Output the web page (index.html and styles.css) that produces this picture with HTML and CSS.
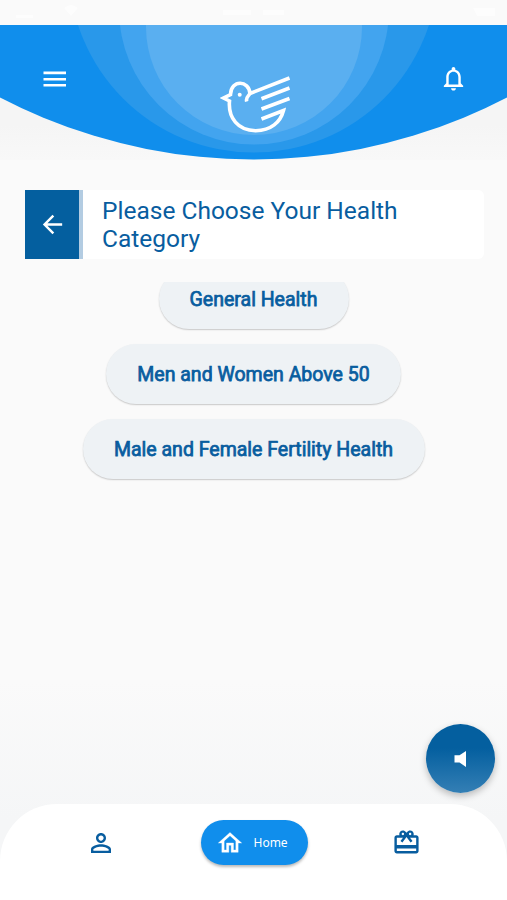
FILE: index.html
```html
<!DOCTYPE html>
<html lang="en">
<head>
<meta charset="utf-8">
<title>Health Category</title>
<link rel="stylesheet" href="styles.css">
</head>
<body>
<div class="app">
  <div class="status">
    <svg width="507" height="25" viewBox="0 0 507 25" fill="#fff" opacity=".6"><path d="M16 15h17v3H16zM64 8q7-6 14 0l-7 8zM223 10h28v5h-28zM263 10h21v5h-21zM473 8h22v8h-18z"/></svg>
  </div>
  <header class="header">
    <svg class="arc" width="507" height="135" viewBox="0 25 507 135">
      <circle cx="253.5" cy="-389.5" r="549" fill="#108eec"/>
      <circle cx="253.5" cy="-32" r="184.5" fill="#2998ea"/>
      <circle cx="254" cy="9.6" r="134.9" fill="#42a4ef"/>
      <circle cx="254" cy="27" r="108" fill="#5aaff0"/>
    </svg>
    <div class="bar">
      <button class="icon" aria-label="Menu"><svg width="24" height="24" viewBox="0 0 24 24" stroke="#fff" stroke-width="2.6"><path d="M.5 5.900h22.500M.5 12.200h22.500M.5 18.300h22.500"/></svg></button>
      <svg class="logo" width="72" height="60" viewBox="218 73 72 60" fill="none" stroke="#fff" stroke-width="3.6">
        <path d="M244.7 101.500C243.500 97 246.500 96.500 248 93.500L287.500 78M248 93.500C247 80 229 79.500 228.500 94.500L221.500 98L227.500 101C226 118 236 130.500 253.500 130.700C269 130.800 278.500 122 281.500 110.500L259.500 119M287.500 88L259.500 98.800M287.500 98.500L259.500 109"/>
        <circle cx="237.700" cy="94.700" r="2" fill="#fff" stroke="none"/>
      </svg>
      <button class="icon" aria-label="Notifications"><svg width="29" height="29" viewBox="0 0 24 24" fill="#fff"><path d="M12 22c1.100 0 2-.9 2-2h-4c0 1.100.9 2 2 2zm6-6v-5c0-3.070-1.630-5.640-4.500-6.320V4c0-.83-.67-1.500-1.500-1.500s-1.500.67-1.500 1.500v.68C7.640 5.360 6 7.920 6 11v5l-2 2v1h16v-1l-2-2zm-2 1H8v-6c0-2.480 1.510-4.500 4-4.500s4 2.020 4 4.500v6z"/></svg></button>
    </div>
  </header>
  <section class="title-card">
    <button class="back" aria-label="Back"><svg width="29" height="29" viewBox="0 0 24 24" fill="#fff"><path d="M20 11H7.830l5.590-5.590L12 4l-8 8 8 8 1.410-1.410L7.830 13H20v-2z"/></svg></button>
    <h1>Please Choose Your Health<br>Category</h1>
  </section>
  <main class="list">
    <button class="pill general"><span>General Health</span></button>
    <button class="pill above"><span>Men and Women Above 50</span></button>
    <button class="pill fertility"><span>Male and Female Fertility Health</span></button>
  </main>
  <nav class="nav">
    <a class="tab person"><svg width="30" height="30" viewBox="0 0 24 24" fill="#085d9f"><path d="M12 5.900c1.160 0 2.100.94 2.100 2.100s-.94 2.100-2.100 2.100S9.900 9.160 9.900 8s.94-2.100 2.100-2.100m0 9c2.970 0 6.100 1.460 6.100 2.100v1.100H5.900V17c0-.64 3.130-2.100 6.100-2.100M12 4C9.790 4 8 5.790 8 8s1.790 4 4 4 4-1.790 4-4-1.790-4-4-4zm0 9c-2.670 0-8 1.340-8 4v3h16v-3c0-2.660-5.330-4-8-4z"/></svg></a>
    <a class="tab home"><svg width="28" height="28" viewBox="0 0 24 24" fill="#fff" stroke="#fff" stroke-width=".3"><path d="M12 5.690l5 4.500V18h-2v-6H9v6H7v-7.810l5-4.500M12 3L2 12h3v8h6v-6h2v6h6v-8h3L12 3z"/></svg><span>Home</span></a>
    <a class="tab gift"><svg width="29" height="29" viewBox="0 0 24 24" fill="#085d9f"><path d="M20 6h-2.180c.11-.31.18-.65.18-1 0-1.660-1.340-3-3-3-1.050 0-1.960.54-2.500 1.350l-.5.67-.5-.68C10.960 2.540 10.050 2 9 2 7.340 2 6 3.340 6 5c0 .35.070.69.180 1H4c-1.110 0-1.990.89-1.990 2L2 19c0 1.110.89 2 2 2h16c1.110 0 2-.89 2-2V8c0-1.110-.89-2-2-2zm-5-2c.55 0 1 .45 1 1s-.45 1-1 1-1-.45-1-1 .45-1 1-1zM9 4c.55 0 1 .45 1 1s-.45 1-1 1-1-.45-1-1 .45-1 1-1zm11 15H4v-2h16v2zm0-5H4V8h5.080L7 10.830 8.620 12 12 7.400l3.380 4.600L17 10.830 14.920 8H20v6z"/></svg></a>
  </nav>
  <button class="sound" aria-label="Sound"><svg width="14" height="18" viewBox="0 0 14 18" fill="#fff"><path d="M.5 5.300h5L12 1v16L5.500 12.500h-5z"/></svg></button>
</div>
</body>
</html>
```
FILE: styles.css
```css
* { box-sizing: border-box; }
body { margin: 0; font-family: Roboto, sans-serif; color: #085d9f; }
button { border: 0; padding: 0; background: none; font: inherit; color: inherit; }
svg { display: block; }
.app {
  position: relative;
  display: flex;
  flex-direction: column;
  width: 507px;
  height: 900px;
  overflow: hidden;
  background: linear-gradient(#fafafa 0 680px, #f5f6f7 820px);
}
.status { height: 25px; background: #fafafa; }
.header {
  position: relative;
  height: 135px;
  background: linear-gradient(#f5f5f5 100px, #f8f8f8);
}
.arc { position: absolute; inset: 0; }
.bar {
  position: relative;
  display: flex;
  justify-content: space-between;
  align-items: flex-start;
  padding: 40px 39px 0 43px;
}
.bar .icon { margin-top: 2px; }
.bar .icon:last-child { margin-top: -1px; }
.logo { margin: 8px 0 0 5px; }
.title-card {
  display: flex;
  height: 69px;
  margin: 30px 23px 0 25px;
  background: #fff;
  border-radius: 0 6px 6px 0;
}
.back {
  display: flex;
  align-items: center;
  justify-content: center;
  width: 58px;
  background: #045f9f;
  border-right: 4px solid #b3cce2;
}
h1 {
  margin: 7px 0 0 19px;
  font-size: 24.5px;
  font-weight: 400;
  line-height: 28px;
  white-space: nowrap;
}
.list {
  display: flex;
  flex-direction: column;
  align-items: center;
  gap: 15px;
  height: 522px;
  margin-top: 23px;
  overflow: hidden;
}
.pill {
  flex: none;
  height: 60px;
  border-radius: 30px;
  background: #eef2f5;
  box-shadow: 0 1px 1.500px rgba(0, 0, 0, .2);
  font-size: 19.5px;
  font-weight: 400;
  -webkit-text-stroke: .75px #085d9f;
  white-space: nowrap;
}
.general { width: 190px; margin-top: -13px; }
.above { width: 295px; }
.fertility { width: 342px; }
.nav {
  display: flex;
  flex: none;
  align-items: flex-start;
  justify-content: space-between;
  height: 96px;
  padding: 16px 86px 0 86px;
  background: #fff;
  border-radius: 57px 57px 0 0;
}
.person { padding-top: 8px; }
.gift { padding-top: 8px; }
.home {
  display: flex;
  align-items: center;
  gap: 10px;
  width: 107px;
  height: 45px;
  padding: 0 0 0 15px;
  border-radius: 23px;
  background: #108eec;
  box-shadow: 0 2px 3px rgba(0, 0, 0, .28);
  color: #fff;
  font: 12px "Noto Sans", sans-serif;
}
.sound {
  position: absolute;
  left: 426px;
  top: 724px;
  display: flex;
  align-items: center;
  justify-content: center;
  width: 69px;
  height: 69px;
  border-radius: 50%;
  background: linear-gradient(#045f9f 35%, #347fb5);
  box-shadow: 0 3px 7px rgba(0, 0, 0, .25);
}
```
